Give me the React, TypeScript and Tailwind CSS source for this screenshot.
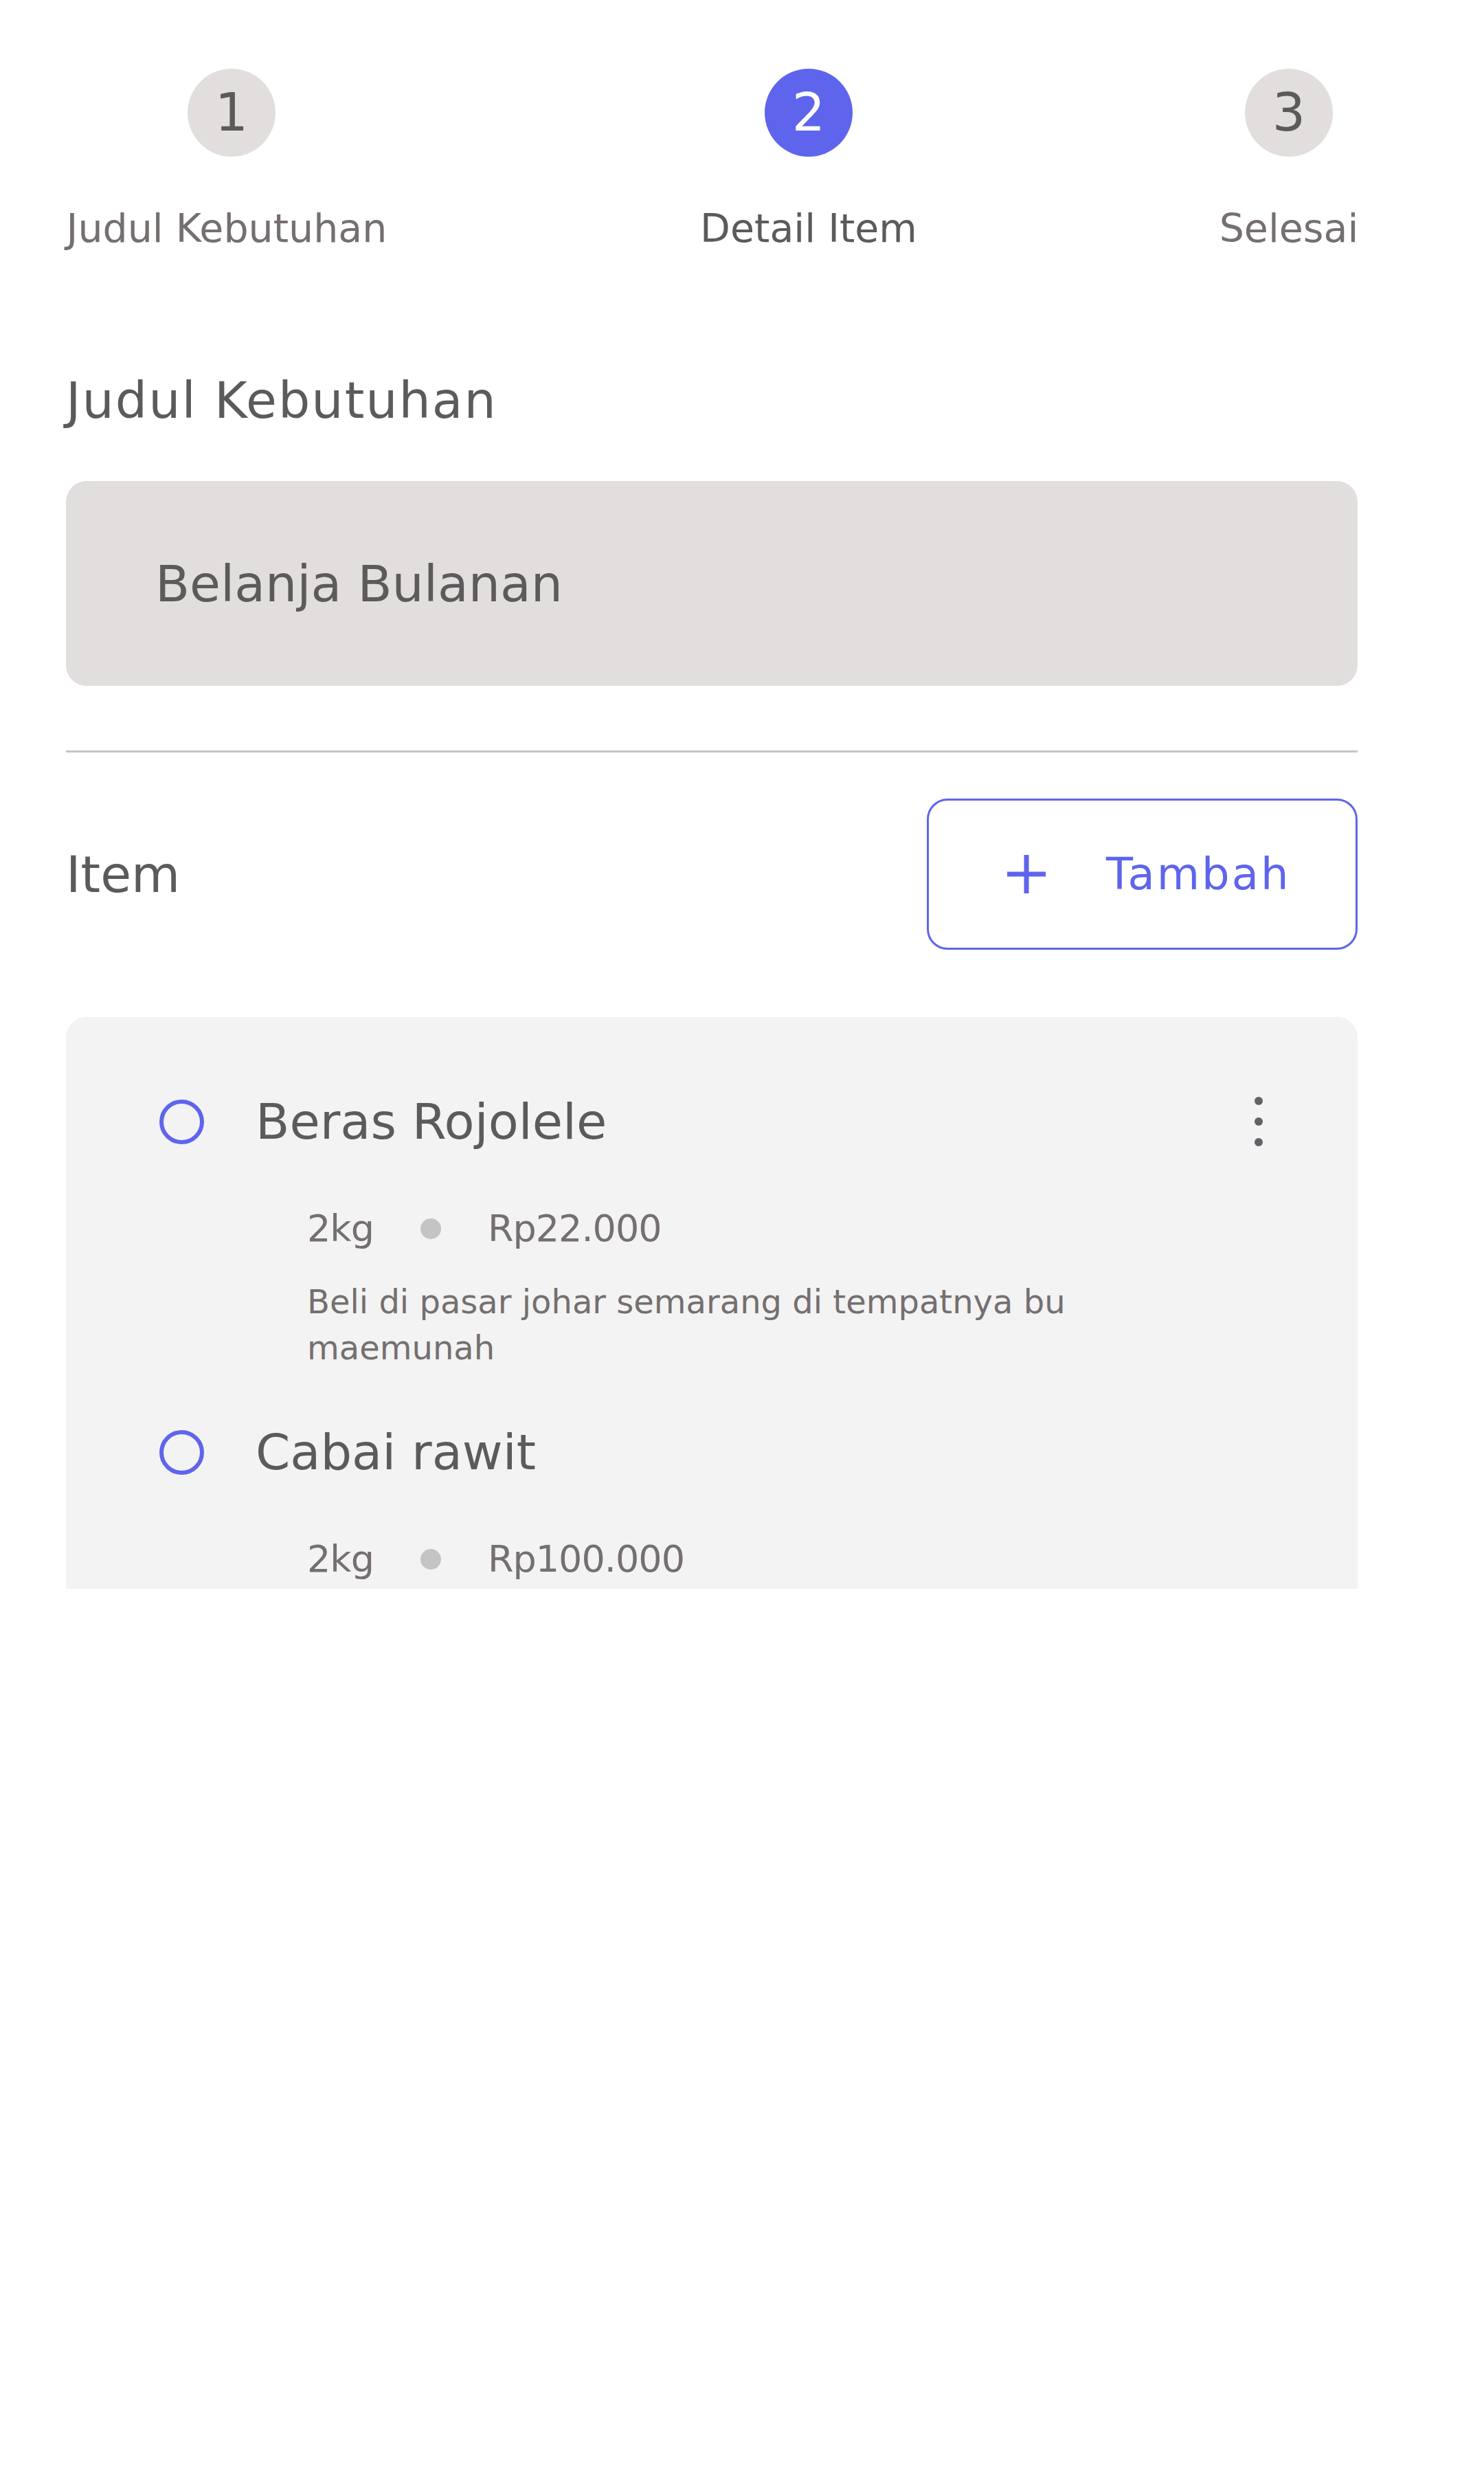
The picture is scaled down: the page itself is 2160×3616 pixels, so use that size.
type Step = {
  no: number
  label: string
  active?: boolean
  width: string
  offset: string
  shift?: string
}

const steps: Step[] = [
  { no: 1, label: 'Judul Kebutuhan', width: 'w-[472px]', offset: 'ml-[94px]', shift: 'translate-x-[7px]' },
  { no: 2, label: 'Detail Item', active: true, width: 'w-[302px]', offset: 'ml-[460px]' },
  { no: 3, label: 'Selesai', width: 'w-[198px]', offset: 'ml-[449px]' },
]

type Item = {
  name: string
  qty: string
  price: string
  note?: string
}

const items: Item[] = [
  {
    name: 'Beras Rojolele',
    qty: '2kg',
    price: 'Rp22.000',
    note: 'Beli di pasar johar semarang di tempatnya bu maemunah',
  },
  { name: 'Cabai rawit', qty: '2kg', price: 'Rp100.000' },
]

function Stepper() {
  return (
    <div className="flex pt-[100px]">
      {steps.map((s) => (
        <div key={s.no} className={`flex flex-col items-center ${s.width} ${s.offset}`}>
          <div
            className={`flex h-[128px] w-[128px] items-center justify-center rounded-full text-[76px] leading-none ${
              s.shift ?? ''
            } ${s.active ? 'bg-[#5e65ec] text-white' : 'bg-[#e3dede] text-[#5c5a5a]'}`}
          >
            {s.no}
          </div>
          <span
            className={`mt-[76px] whitespace-nowrap text-[57px] leading-none ${
              s.active ? 'text-[#5c5a5a]' : 'text-[#756f6f]'
            }`}
          >
            {s.label}
          </span>
        </div>
      ))}
    </div>
  )
}

// titik tiga vertikal (menu item)
function Kebab() {
  return (
    <div className="ml-auto mr-[138px] flex flex-col gap-[18px]">
      <span className="h-[12px] w-[12px] rounded-full bg-[#5f6368]" />
      <span className="h-[12px] w-[12px] rounded-full bg-[#5f6368]" />
      <span className="h-[12px] w-[12px] rounded-full bg-[#5f6368]" />
    </div>
  )
}

function ItemRow({ item, first }: { item: Item; first: boolean }) {
  return (
    <div className={first ? '' : 'mt-[82px]'}>
      <div className="flex h-[72px] items-center">
        <span className="h-[65px] w-[65px] shrink-0 rounded-full border-[6px] border-[#5e65ec]" />
        <span className="ml-[75px] whitespace-nowrap text-[72px] leading-none text-[#5c5a5a]">
          {item.name}
        </span>
        {first && <Kebab />}
      </div>
      <div className="ml-[215px] mt-[93px] flex items-center text-[54px] leading-none tracking-[-1px] text-[#756f6f]">
        <span>{item.qty}</span>
        <span className="mx-[68px] h-[30px] w-[30px] rounded-full bg-[#c4c4c4]" />
        <span>{item.price}</span>
      </div>
      {item.note && (
        <p className="ml-[215px] mt-[46px] max-w-[1200px] text-[48px] leading-[67px] text-[#756f6f]">
          {item.note}
        </p>
      )}
    </div>
  )
}

export default function App() {
  return (
    <div className="h-[3616px] w-[2160px] bg-white font-['DejaVu_Sans','Noto_Sans',sans-serif]">
      <Stepper />

      <div className="ml-[96px] w-[1880px]">
        <h2 className="mt-[185px] text-[73px] leading-none tracking-[2px] text-[#5c5a5a]">Judul Kebutuhan</h2>

        <div className="mt-[81px] flex h-[298px] items-center rounded-[30px] bg-[#e3dede] pl-[130px]">
          <span className="text-[73px] leading-none text-[#5c5a5a]">Belanja Bulanan</span>
        </div>

        <div className="mt-[94px] h-[3px] bg-[#c9c3c3]" />

        <div className="mt-[67px] flex items-center justify-between">
          <span className="text-[73px] leading-none text-[#5c5a5a]">Item</span>
          <button className="flex h-[220px] w-[627px] items-center rounded-[30px] border-[3px] border-[#5e65ec] pl-[114px] text-[#5e65ec]">
            <svg width="56" height="56" viewBox="0 0 56 56" fill="none">
              <path d="M28 0v56M0 28h56" stroke="currentColor" strokeWidth="7" />
            </svg>
            <span className="ml-[88px] text-[64px] leading-none tracking-[3px]">Tambah</span>
          </button>
        </div>

        <div className="mt-[98px] h-[832px] overflow-hidden rounded-t-[30px] bg-[#f3f3f3] pl-[136px] pt-[116px]">
          {items.map((it, i) => (
            <ItemRow key={it.name} item={it} first={i === 0} />
          ))}
        </div>
      </div>
    </div>
  )
}
